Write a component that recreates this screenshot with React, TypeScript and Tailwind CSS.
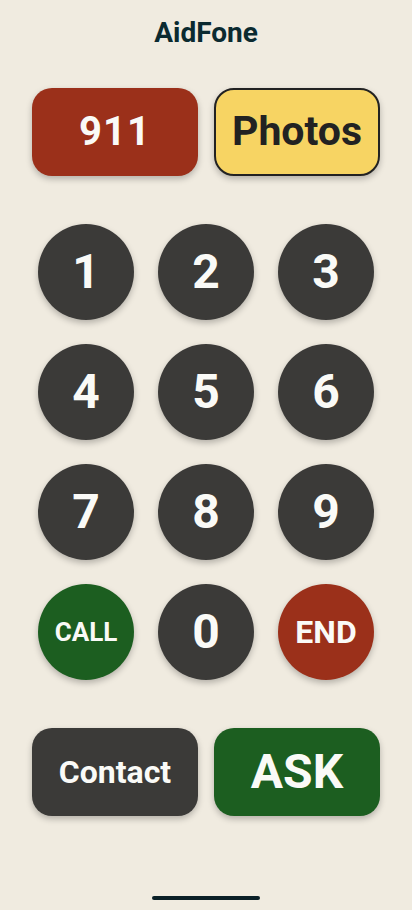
import React from 'react';

const keys = ['1', '2', '3', '4', '5', '6', '7', '8', '9'];

function Key({ label }: { label: string }) {
  return (
    <button className="w-[96px] h-[96px] rounded-full bg-[#3b3a38] text-[#fafaf7] text-[48px] font-bold leading-none flex items-center justify-center shadow-[0_3px_6px_rgba(0,0,0,0.25)]">
      {label}
    </button>
  );
}

export default function App() {
  return (
    <main
      className="w-[412px] h-[910px] bg-[#f0ebe0] flex flex-col items-center"
      style={{ fontFamily: 'Roboto, "Noto Sans", sans-serif' }}
    >
      <h1 className="mt-[16px] h-[34px] text-[28px] font-bold text-[#0b2a30] leading-[34px]">AidFone</h1>

      {/* top actions */}
      <div className="mt-[38px] grid grid-cols-2 gap-[16px] w-[348px]">
        <button className="h-[88px] rounded-[20px] bg-[#9b301a] text-[#fafaf7] text-[40px] font-bold tracking-wide shadow-[0_3px_6px_rgba(0,0,0,0.25)]">
          911
        </button>
        <button className="h-[88px] rounded-[20px] bg-[#f7d463] border-2 border-[#222222] text-[#222222] text-[41px] font-bold shadow-[0_3px_6px_rgba(0,0,0,0.25)]">
          Photos
        </button>
      </div>

      {/* keypad */}
      <div className="mt-[48px] grid grid-cols-3 gap-[24px]">
        {keys.map((k) => (
          <Key key={k} label={k} />
        ))}
        <button className="w-[96px] h-[96px] rounded-full bg-[#1c5e20] text-[#fafaf7] text-[26px] font-bold leading-none flex items-center justify-center shadow-[0_3px_6px_rgba(0,0,0,0.25)]">
          CALL
        </button>
        <Key label="0" />
        <button className="w-[96px] h-[96px] rounded-full bg-[#9b301a] text-[#fafaf7] text-[32px] font-bold leading-none flex items-center justify-center shadow-[0_3px_6px_rgba(0,0,0,0.25)]">
          END
        </button>
      </div>

      {/* bottom actions */}
      <div className="mt-[48px] grid grid-cols-2 gap-[16px] w-[348px]">
        <button className="h-[88px] rounded-[20px] bg-[#3b3a38] text-[#fafaf7] text-[32px] font-bold shadow-[0_3px_6px_rgba(0,0,0,0.25)]">
          Contact
        </button>
        <button className="h-[88px] rounded-[20px] bg-[#1c5e20] text-[#fafaf7] text-[48px] font-bold shadow-[0_3px_6px_rgba(0,0,0,0.25)]">
          ASK
        </button>
      </div>

      <div className="mt-auto mb-[10px] w-[108px] h-[4px] rounded-full bg-[#0b2027]" />
    </main>
  );
}
